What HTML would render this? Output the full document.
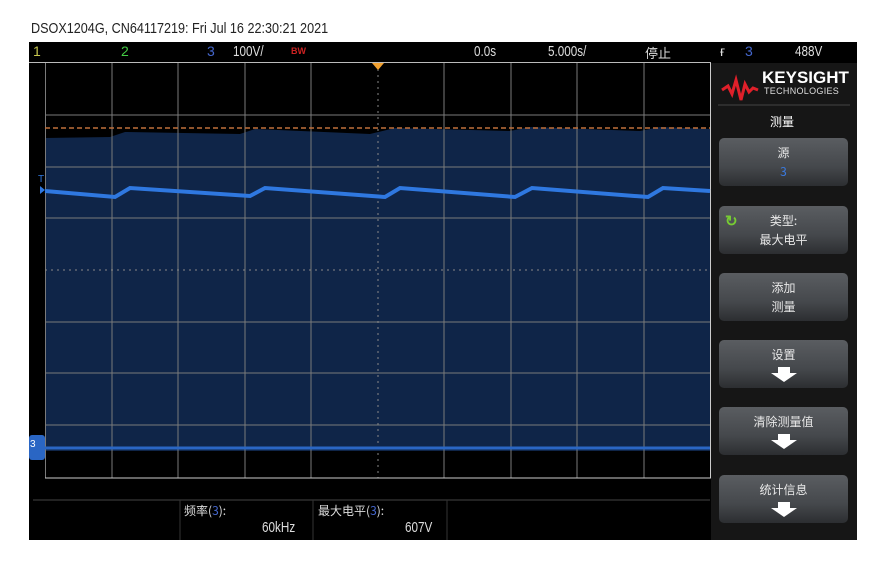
<!DOCTYPE html>
<html><head><meta charset="utf-8"><style>
body{margin:0;width:872px;height:580px;background:#fff;position:relative;overflow:hidden;font-family:"Liberation Sans","Noto Sans CJK SC",sans-serif}
.t{position:absolute;white-space:nowrap}
.n{transform:scaleX(.78);transform-origin:left top}
.btn{position:absolute;left:719px;width:129px;height:48px;border-radius:5px;background:linear-gradient(#5a5d61,#45484c 60%,#2c2e31);color:#e8e8e8;font-family:"Noto Sans CJK SC",sans-serif;font-size:12px;text-align:center;line-height:19px;box-sizing:border-box;padding-top:5px}
.arr{width:0;height:0;margin:3px auto 0;border-left:13px solid transparent;border-right:13px solid transparent;border-top:9px solid #fff;position:relative}
.arr:before{content:"";position:absolute;left:-6px;top:-15px;width:12px;height:6px;background:#fff}
</style></head><body>
<div class="t" style="left:31px;top:21px;font-size:14.5px;color:#222;transform:scaleX(.87);transform-origin:left top">DSOX1204G, CN64117219: Fri Jul 16 22:30:21 2021</div>
<div style="position:absolute;left:29px;top:42px;width:828px;height:498px;background:#000"></div>
<div style="position:absolute;left:29px;top:62px;width:682px;height:1px;background:#bbb"></div>
<div class="t" style="left:33px;top:43px;font-size:14px;color:#c8c850">1</div>
<div class="t" style="left:121px;top:43px;font-size:14px;color:#4c4">2</div>
<div class="t" style="left:207px;top:43px;font-size:14px;color:#46c">3</div>
<div class="t n" style="left:233px;top:43px;font-size:15px;color:#ddd">100V/</div>
<div class="t" style="left:291px;top:46px;font-size:9px;color:#c22;font-weight:bold">BW</div>
<div class="t n" style="left:474px;top:43px;font-size:15px;color:#ddd">0.0s</div>
<div class="t n" style="left:548px;top:43px;font-size:15px;color:#ddd">5.000s/</div>
<div class="t" style="left:645px;top:43px;font-size:13px;color:#ddd;font-family:'Noto Sans CJK SC',sans-serif">停止</div>
<div class="t" style="left:720px;top:43px;font-size:14px;color:#ddd">ғ</div>
<div class="t" style="left:745px;top:43px;font-size:14px;color:#46c">3</div>
<div class="t n" style="left:795px;top:43px;font-size:15px;color:#ddd">488V</div>
<svg style="position:absolute;left:0;top:0" width="872" height="580">
<path d="M45 138 L110 137 L125 132 L240 134 L255 129 L370 134 L395 128 L510 131 L530 127 L640 131 L660 127 L710 129 L710 451 L45 451Z" fill="#0f2548"/>
<g stroke="#7a7a7a" stroke-width="1">
<line x1="45.5" y1="63" x2="45.5" y2="478"/><line x1="112" y1="63" x2="112" y2="478"/><line x1="178" y1="63" x2="178" y2="478"/><line x1="245" y1="63" x2="245" y2="478"/><line x1="311" y1="63" x2="311" y2="478"/><line x1="444" y1="63" x2="444" y2="478"/><line x1="511" y1="63" x2="511" y2="478"/><line x1="577" y1="63" x2="577" y2="478"/><line x1="644" y1="63" x2="644" y2="478"/>
<line x1="45" y1="115" x2="710" y2="115"/><line x1="45" y1="167" x2="710" y2="167"/><line x1="45" y1="218" x2="710" y2="218"/><line x1="45" y1="322" x2="710" y2="322"/><line x1="45" y1="373" x2="710" y2="373"/><line x1="45" y1="425" x2="710" y2="425"/>
</g>
<line x1="378" y1="63" x2="378" y2="478" stroke="#888" stroke-dasharray="2,4"/>
<line x1="45" y1="270" x2="710" y2="270" stroke="#888" stroke-dasharray="2,4"/>
<line x1="45" y1="478" x2="711" y2="478" stroke="#ccc"/>
<line x1="710.5" y1="63" x2="710.5" y2="478" stroke="#ccc"/>
<line x1="45" y1="128" x2="710" y2="128" stroke="#c0703a" stroke-width="1.5" stroke-dasharray="5,3"/>
<path d="M45 191 L115 197 L130 188 L250 196 L265 188 L385 197 L400 188 L515 197 L532 188 L648 197 L663 188 L710 191" fill="none" stroke="#2f78e0" stroke-width="4"/>
<line x1="45" y1="448" x2="710" y2="448" stroke="#2a66c4" stroke-width="3"/>
<path d="M372 63 L384 63 L378 70Z" fill="#f0a030"/>
<path d="M40 186 L45 190 L40 194Z" fill="#2f78e0"/>
<text x="38" y="182" fill="#2f78e0" font-size="10">T</text>
<rect x="29" y="435" width="16" height="25" rx="3" fill="#2a66c4"/>
<text x="30" y="447" fill="#fff" font-size="10">3</text>
<line x1="33" y1="500" x2="710" y2="500" stroke="#444"/>
<line x1="180" y1="500" x2="180" y2="540" stroke="#333"/><line x1="313" y1="500" x2="313" y2="540" stroke="#333"/><line x1="447" y1="500" x2="447" y2="540" stroke="#333"/>
<rect x="711" y="63" width="146" height="477" fill="#161616"/>
<path d="M722 90 L728 86 L732 94 L736 80 L741 100 L745 84 L749 92 L753 88 L758 90" fill="none" stroke="#e0202a" stroke-width="3"/>
<line x1="718" y1="105" x2="850" y2="105" stroke="#444"/>
</svg>
<div class="t" style="left:762px;top:68px;font-size:17px;font-weight:bold;color:#fff">KEYSIGHT</div>
<div class="t" style="left:764px;top:86px;font-size:9px;color:#ddd;letter-spacing:.3px">TECHNOLOGIES</div>
<div class="t" style="left:770px;top:113px;font-size:12px;color:#fff;font-family:'Noto Sans CJK SC',sans-serif">测量</div>
<div class="btn" style="top:138px">源<br><span style="color:#3a7ae0">3</span></div>
<div class="btn" style="top:206px">类型:<br>最大电平<span style="position:absolute;left:6px;top:5px;color:#7c3;font-size:15px;font-weight:bold">↻</span></div>
<div class="btn" style="top:273px">添加<br>测量</div>
<div class="btn" style="top:340px">设置<div class="arr" style="margin-top:9px"></div></div>
<div class="btn" style="top:407px">清除测量值<div class="arr" style="margin-top:9px"></div></div>
<div class="btn" style="top:475px">统计信息<div class="arr" style="margin-top:9px"></div></div>
<div class="t" style="left:184px;top:502px;font-size:12px;color:#ddd;font-family:'Noto Sans CJK SC',sans-serif">频率(<span style="color:#46c">3</span>):</div>
<div class="t n" style="left:262px;top:519px;font-size:15px;color:#ddd">60kHz</div>
<div class="t" style="left:318px;top:502px;font-size:12px;color:#ddd;font-family:'Noto Sans CJK SC',sans-serif">最大电平(<span style="color:#46c">3</span>):</div>
<div class="t n" style="left:405px;top:519px;font-size:15px;color:#ddd">607V</div>
</body></html>
